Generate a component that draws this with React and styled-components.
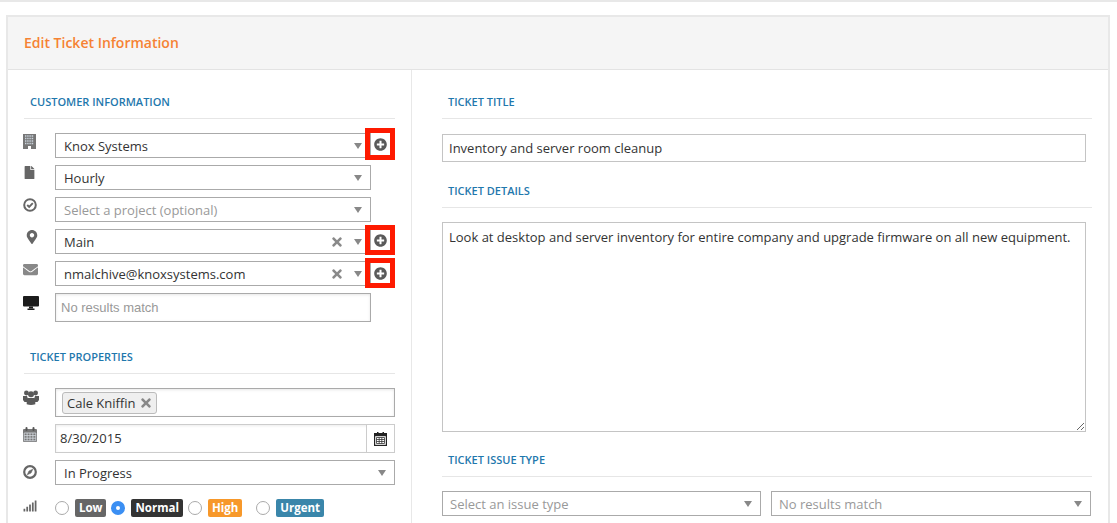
import React from 'react';
import styled, {createGlobalStyle} from 'styled-components';
import {
	FaFile,
	FaMapMarkerAlt,
	FaEnvelope,
	FaSignal,
	FaPlusCircle,
	FaTimes
} from 'react-icons/fa';

const GlobalStyle = createGlobalStyle`
	html, body {
		margin: 0;
		height: 523px;
		overflow: hidden;
		background: #fff;
		font-family: 'Open Sans', 'Liberation Sans', sans-serif;
		font-size: 13px;
		color: #333;
	}
`;

const Page = styled.div`
	box-sizing: border-box;
	height: 523px;
	border-top: 2px solid #e8e8e8;
	padding: 13px 7px 0 6px;
`;

const Panel = styled.div`
	box-sizing: border-box;
	height: 508px;
	display: flex;
	flex-direction: column;
	border: 2px solid #e8e8e8;
	border-bottom: none;
`;

const PanelHeader = styled.div`
	height: 52px;
	line-height: 52px;
	padding-left: 16px;
	background: #f5f5f5;
	border-bottom: 1px solid #e3e3e3;
	color: #f58233;
	font-size: 14px;
	font-weight: 600;
`;

const PanelBody = styled.div`
	display: flex;
	flex: 1;
`;

const LeftColumn = styled.div`
	width: 371px;
	padding: 24px 16px 0;
	border-right: 1px solid #e8e8e8;
	flex: none;
`;

const RightColumn = styled.div`
	flex: 1;
	padding: 24px 16px 0 30px;
`;

const SectionTitle = styled.div`
	line-height: 16px;
	padding: 0 6px 8px;
	margin-top: ${p => p.$top || 0}px;
	margin-bottom: ${p => p.$bottom || 14}px;
	border-bottom: 1px solid #e6e6e6;
	color: #1f78ad;
	font-size: 11px;
	font-weight: 600;
	text-transform: uppercase;
`;

const Row = styled.div`
	display: flex;
	align-items: flex-start;
	margin-bottom: ${p => p.$gap ?? 7}px;
`;

const IconCell = styled.div`
	width: 32px;
	flex: none;
	margin-left: -1px;
	padding-top: ${p => p.$top ?? 1}px;
	padding-left: ${p => p.$left || 0}px;
	box-sizing: border-box;
	font-size: ${p => p.$size || 15}px;
	line-height: 0;
	color: ${p => p.$color || '#666'};
	svg {
		width: auto;
		height: 1em;
	}
`;

const Select = styled.div`
	display: flex;
	align-items: center;
	box-sizing: border-box;
	width: ${p => p.$width || '316px'};
	height: 25px;
	padding: 0 8px 0 ${p => p.$pad || 8}px;
	border: 1px solid #aaa;
	background: #fff;
	color: ${p => (p.$placeholder ? '#999' : '#333')};
	flex: none;
	font-size: 13px;
`;

const SelectText = styled.span`
	flex: 1;
	white-space: nowrap;
`;

const Clear = styled(FaTimes)`
	font-size: 14px;
	color: #8a8a8a;
	margin-right: 10px;
`;

const Caret = styled.span`
	width: 0;
	height: 0;
	border-left: 4px solid transparent;
	border-right: 4px solid transparent;
	border-top: 6px solid #888;
`;

const AddButton = styled.div`
	display: flex;
	align-items: center;
	justify-content: center;
	box-sizing: border-box;
	width: 31px;
	height: ${p => p.$height}px;
	margin: ${p => p.$top}px 0 -8px -6px;
	border: 5px solid #fe1a00;
	color: #5a5a5a;
	font-size: 13px;
	position: relative;
`;

const TextBox = styled.div`
	box-sizing: border-box;
	width: 316px;
	height: 29px;
	line-height: 27px;
	padding: 0 5px;
	border: 1px solid #aaa;
	box-shadow: inset 0 1px 3px rgba(0, 0, 0, 0.1);
	color: #999;
	font-family: 'Liberation Sans', sans-serif;
	font-size: 13px;
`;

const TagBox = styled.div`
	display: flex;
	align-items: center;
	box-sizing: border-box;
	width: 340px;
	height: 29px;
	padding-left: 6px;
	border: 1px solid #aaa;
	box-shadow: inset 0 1px 3px rgba(0, 0, 0, 0.1);
`;

const Tag = styled.span`
	display: flex;
	align-items: center;
	gap: 3px;
	height: 20px;
	padding: 0 3px 0 4px;
	border: 1px solid #bbb;
	border-radius: 3px;
	background: #efefef;
	font-size: 13px;
	svg {
		font-size: 14px;
		color: #888;
	}
`;

const DateGroup = styled.div`
	display: flex;
	box-sizing: border-box;
	width: 340px;
	height: 29px;
	border: 1px solid #ccc;
	box-shadow: inset 0 1px 3px rgba(0, 0, 0, 0.08);
`;

const DateValue = styled.div`
	flex: 1;
	line-height: 27px;
	padding-left: 4px;
	font-size: 13px;
`;

const DateAddon = styled.div`
	display: flex;
	align-items: center;
	justify-content: center;
	width: 27px;
	border-left: 1px solid #ccc;
	background: #fff;
`;

const PriorityRow = styled.div`
	display: flex;
	align-items: center;
	height: 18px;
`;

const Radio = styled.span`
	box-sizing: border-box;
	width: 14px;
	height: 14px;
	margin-left: ${p => p.$left || 0}px;
	margin-right: 6px;
	border-radius: 50%;
	border: ${p => (p.$checked ? '5px solid #3b8ff3' : '1px solid #aaa')};
	background: #fff;
	flex: none;
`;

const Badge = styled.span`
	height: 18px;
	line-height: 18px;
	padding: 0 4px;
	border-radius: 2px;
	background: ${p => p.$bg};
	color: #fff;
	font-size: 11.5px;
	font-weight: 700;
`;

const TitleInput = styled.div`
	box-sizing: border-box;
	width: 644px;
	height: 28px;
	line-height: 27px;
	padding: 0 6px;
	border: 1px solid #c4c4c4;
	color: #333;
	font-size: 13px;
`;

const Details = styled.textarea`
	display: block;
	box-sizing: border-box;
	width: 644px;
	height: 210px;
	padding: 5px 6px;
	border: 1px solid #c4c4c4;
	border-radius: 0;
	outline: none;
	color: #333;
	font-family: inherit;
	font-size: 13px;
	line-height: 18px;
`;

const IssueRow = styled.div`
	display: flex;
	gap: 10px;
`;

const BuildingIcon = () => (
	<svg viewBox="0 0 13 15">
		<rect width="13" height="15" fill="#777"/>
		<path
			d="M2 2h9M2 4.500h9M2 7h9M2 9.500h9"
			stroke="#c9d3dc"
			strokeWidth="1.3"
			strokeDasharray="1.4 0.8"
		/>
		<rect x="5" y="12" width="3" height="3" fill="#fff"/>
	</svg>
);

const CheckIcon = () => (
	<svg viewBox="0 0 14 14" fill="none" stroke="currentColor">
		<circle cx="7" cy="7" r="5.800" strokeWidth="2"/>
		<path d="M4.200 7l2 2 3.600-3.800" strokeWidth="1.900"/>
	</svg>
);

const DesktopIcon = () => (
	<svg viewBox="0 0 16 14" fill="currentColor">
		<rect width="16" height="10.500" rx="1"/>
		<rect x="6" y="10.500" width="4" height="2"/>
		<rect x="4.500" y="12.500" width="7" height="1.500"/>
	</svg>
);

const GroupIcon = () => (
	<svg viewBox="0 0 16 15" fill="currentColor">
		<circle cx="3.400" cy="3" r="2.400"/>
		<circle cx="12.600" cy="3" r="2.400"/>
		<circle cx="8" cy="4.200" r="3"/>
		<path d="M0 6h4l1 3v3H1.500L0 10zM16 6h-4l-1 3v3h3.500L16 10z"/>
		<path d="M4.500 8h7l.8 2v4.200c-3 1-5.600 1-8.600 0V10z"/>
	</svg>
);

const CalendarIcon = () => (
	<svg viewBox="0 0 14 15">
		<rect y="2" width="14" height="13" rx="1" fill="#777"/>
		<rect x="2.500" width="2" height="4" rx="1" fill="#555"/>
		<rect x="9.500" width="2" height="4" rx="1" fill="#555"/>
		<path
			d="M1.200 6h11.600v7.800H1.200zM1.200 8.600h11.600M1.200 11.200h11.600M4.100 6v7.800M7 6v7.800M9.900 6v7.800"
			fill="none"
			stroke="#d8dde3"
			strokeWidth="0.8"
		/>
	</svg>
);

const CompassIcon = () => (
	<svg viewBox="0 0 14 14" fill="none" stroke="currentColor">
		<circle cx="7" cy="7" r="5.800" strokeWidth="2.200"/>
		<path d="M9.800 4.200L8 8 4.200 9.800 6 6z" fill="currentColor" strokeWidth="0.600"/>
	</svg>
);

const PickerIcon = () => (
	<svg width="13" height="14" viewBox="0 0 13 14">
		<rect x="0.600" y="1.600" width="11.800" height="11.800" fill="none" stroke="#222" strokeWidth="1.200"/>
		<rect x="0.600" y="1.600" width="11.800" height="2.600" fill="#222"/>
		<rect x="3" width="1.500" height="2.500" fill="#222"/>
		<rect x="8.500" width="1.500" height="2.500" fill="#222"/>
		<path
			d="M2.500 5.500h8v6h-8zM2.500 7.500h8M2.500 9.500h8M5.200 5.500v6M7.800 5.500v6"
			fill="none"
			stroke="#333"
			strokeWidth="0.800"
		/>
	</svg>
);

const topFields = [
	{icon: <BuildingIcon/>, text: 'Knox Systems', add: {top: -5, height: 32}},
	{icon: <FaFile/>, text: 'Hourly', size: 13},
	{icon: <CheckIcon/>, text: 'Select a project (optional)', size: 14},
	{icon: <FaMapMarkerAlt/>, text: 'Main', size: 14, left: 2, clear: true, add: {top: -4, height: 30}},
	{
		icon: <FaEnvelope/>,
		text: 'nmalchive@knoxsystems.com',
		size: 15,
		color: '#888',
		clear: true,
		add: {top: -3, height: 30}
	}
];

const priorities = [
	{label: 'Low', bg: '#666'},
	{label: 'Normal', bg: '#333', checked: true, left: 5},
	{label: 'High', bg: '#f7982a', left: 5},
	{label: 'Urgent', bg: '#3a86aa', left: 14}
];

export default function App() {
	return (
		<Page>
			<GlobalStyle/>
			<Panel>
				<PanelHeader>Edit Ticket Information</PanelHeader>
				<PanelBody>
					<LeftColumn>
						<SectionTitle>Customer Information</SectionTitle>
						{topFields.map(field => (
							<Row key={field.text}>
								<IconCell $size={field.size} $left={field.left} $color={field.color}>
									{field.icon}
								</IconCell>
								<Select $placeholder={field.text.startsWith('Select')}>
									<SelectText>{field.text}</SelectText>
									{field.clear && <Clear/>}
									<Caret/>
								</Select>
								{field.add && (
									<AddButton $top={field.add.top} $height={field.add.height}>
										<FaPlusCircle/>
									</AddButton>
								)}
							</Row>
						))}
						<Row $gap={0}>
							<IconCell $color="#1c1c1c" $top={3} $size={14}><DesktopIcon/></IconCell>
							<TextBox>No results match</TextBox>
						</Row>

						<SectionTitle $top={27}>Ticket Properties</SectionTitle>
						<Row>
							<IconCell $size={15} $top={2} $color="#5a5a5a"><GroupIcon/></IconCell>
							<TagBox>
								<Tag>Cale Kniffin <FaTimes/></Tag>
							</TagBox>
						</Row>
						<Row>
							<IconCell $top={3}><CalendarIcon/></IconCell>
							<DateGroup>
								<DateValue>8/30/2015</DateValue>
								<DateAddon><PickerIcon/></DateAddon>
							</DateGroup>
						</Row>
						<Row $gap={14}>
							<IconCell $size={14} $top={5}><CompassIcon/></IconCell>
							<Select $width="340px">
								<SelectText>In Progress</SelectText>
								<Caret/>
							</Select>
						</Row>
						<Row $gap={0}>
							<IconCell $size={14} $top={0}><FaSignal/></IconCell>
							<PriorityRow>
								{priorities.map(p => (
									<React.Fragment key={p.label}>
										<Radio $checked={p.checked} $left={p.left}/>
										<Badge $bg={p.bg}>{p.label}</Badge>
									</React.Fragment>
								))}
							</PriorityRow>
						</Row>
					</LeftColumn>
					<RightColumn>
						<SectionTitle $bottom={15}>Ticket Title</SectionTitle>
						<TitleInput>Inventory and server room cleanup</TitleInput>
						<SectionTitle $top={21}>Ticket Details</SectionTitle>
						<Details
							readOnly
							defaultValue="Look at desktop and server inventory for entire company and upgrade firmware on all new equipment."
						/>
						<SectionTitle $top={20}>Ticket Issue Type</SectionTitle>
						<IssueRow>
							<Select $placeholder $pad={7} $width="319px">
								<SelectText>Select an issue type</SelectText>
								<Caret/>
							</Select>
							<Select $placeholder $pad={7} $width="320px">
								<SelectText>No results match</SelectText>
								<Caret/>
							</Select>
						</IssueRow>
					</RightColumn>
				</PanelBody>
			</Panel>
		</Page>
	);
}
